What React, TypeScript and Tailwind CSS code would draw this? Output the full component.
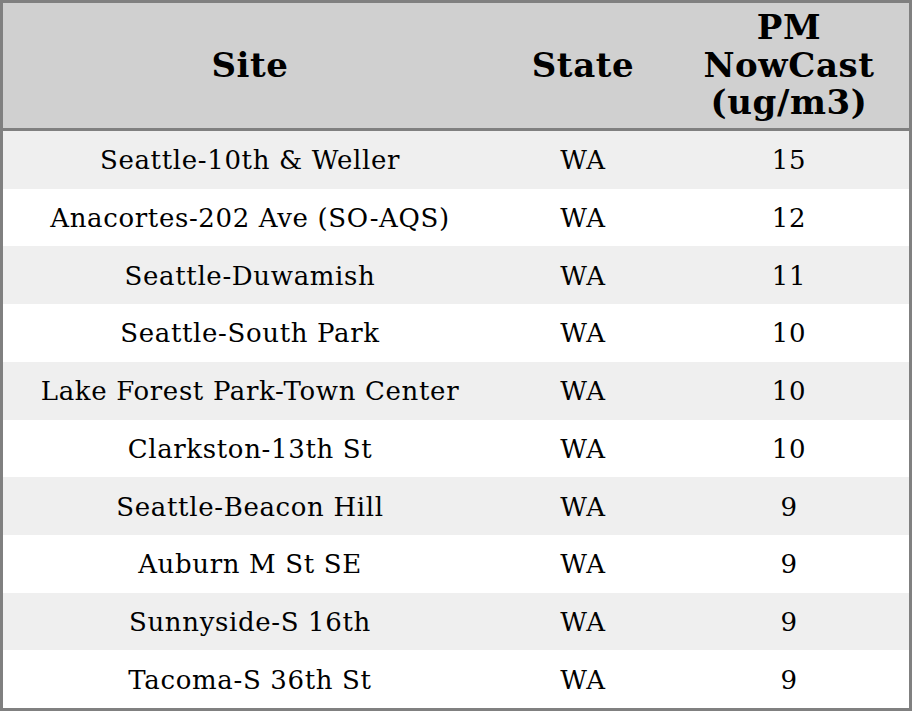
import React from "react";

const rows: [string, string, string][] = [
  ["Seattle-10th & Weller", "WA", "15"],
  ["Anacortes-202 Ave (SO-AQS)", "WA", "12"],
  ["Seattle-Duwamish", "WA", "11"],
  ["Seattle-South Park", "WA", "10"],
  ["Lake Forest Park-Town Center", "WA", "10"],
  ["Clarkston-13th St", "WA", "10"],
  ["Seattle-Beacon Hill", "WA", "9"],
  ["Auburn M St SE", "WA", "9"],
  ["Sunnyside-S 16th", "WA", "9"],
  ["Tacoma-S 36th St", "WA", "9"],
];

export default function App() {
  return (
    <div
      className="w-[912px] h-[711px] border-[3px] border-[#808080] flex flex-col text-black bg-white"
      style={{ fontFamily: '"DejaVu Serif", serif' }}
    >
      <div className="h-[125px] shrink-0 bg-[#d0d0d0] border-b-[3px] border-[#808080] box-content grid grid-cols-[494px_172px_240px] items-center text-center font-bold text-[34px] leading-[37.5px] tracking-[0.6px]">
        <div>Site</div>
        <div>State</div>
        <div>
          PM
          <br />
          NowCast
          <br />
          (ug/m3)
        </div>
      </div>
      <div className="flex-1 flex flex-col">
        {rows.map((r, i) => (
          <div
            key={i}
            className={`flex-1 grid grid-cols-[494px_172px_240px] items-center text-center text-[26px] tracking-[0.65px] pt-[2px] ${
              i % 2 === 0 ? "bg-[#efefef]" : "bg-white"
            }`}
          >
            <div>{r[0]}</div>
            <div>{r[1]}</div>
            <div>{r[2]}</div>
          </div>
        ))}
      </div>
    </div>
  );
}
